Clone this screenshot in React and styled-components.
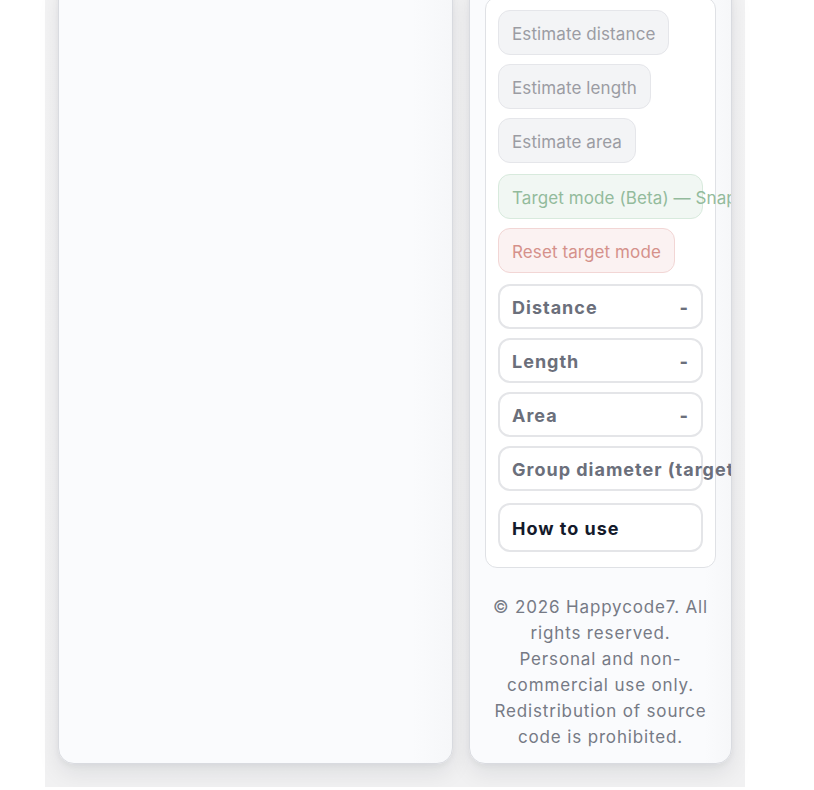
import React from 'react';
import styled, { createGlobalStyle } from 'styled-components';

const GlobalStyle = createGlobalStyle`
  html, body {
    margin: 0;
    padding: 0;
    background: #ffffff;
    font-family: Inter, "Noto Sans", sans-serif;
    overflow: hidden;
  }
`;

const Shell = styled.div`
  width: 700px;
  margin: -19px 0 0 45px;
  padding: 0 13px 23px;
  box-sizing: border-box;
  background: linear-gradient(180deg, #f3f3f4 0%, #f1f1f2 100%);
  display: grid;
  grid-template-columns: 395px 263px;
  gap: 16px;
`;

const Panel = styled.div`
  background: linear-gradient(90deg, #fafbfd 0%, #fafbfd 90%, #f6f7f9 100%);
  border: 1px solid #d9dbe0;
  border-radius: 16px;
  box-shadow: 0 10px 22px rgba(17, 24, 39, 0.08), 0 2px 6px rgba(17, 24, 39, 0.05);
  overflow: hidden;
  box-sizing: border-box;
`;

const Canvas = styled(Panel)`
  min-height: 783px;
`;

const Sidebar = styled(Panel)`
  padding: 15px 15px 12px 15px;
  display: flex;
  flex-direction: column;
`;

const Card = styled.div`
  background: #ffffff;
  border: 1px solid #dfe1e5;
  border-radius: 12px;
  padding: 12px 12px 15px;
  display: flex;
  flex-direction: column;
  align-items: flex-start;
`;

const tones = {
  muted: { bg: '#f3f4f6', border: '#e5e6ea', color: '#9b9ca3' },
  green: { bg: '#f1f7f3', border: '#d8eadd', color: '#93bb9c' },
  red: { bg: '#fbf2f2', border: '#f2d6d5', color: '#d5918b' },
};

const Action = styled.button`
  height: 45px;
  margin-top: ${(p) => p.$gap || 0}px;
  padding: 2px 13px 0;
  box-sizing: border-box;
  border-radius: 12px;
  border: 1.5px solid ${(p) => tones[p.$tone].border};
  background: ${(p) => tones[p.$tone].bg};
  color: ${(p) => tones[p.$tone].color};
  font-family: Inter, "Noto Sans", sans-serif;
  font-size: 17px;
  letter-spacing: 0.1px;
  white-space: nowrap;
  text-align: left;
  overflow: visible;
  width: ${(p) => (p.$full ? '205px' : 'auto')};
`;

const Result = styled.div`
  width: 205px;
  height: ${(p) => p.$tall || 45}px;
  margin-top: ${(p) => p.$gap || 0}px;
  box-sizing: border-box;
  padding: 2px 12px 0 12px;
  border: 2px solid #e4e5e8;
  border-radius: 12px;
  background: #ffffff;
  display: flex;
  align-items: center;
  justify-content: space-between;
  font-size: 18px;
  font-weight: 700;
  letter-spacing: 1px;
  color: ${(p) => (p.$strong ? '#141a2b' : '#6b6f7b')};
  white-space: nowrap;
`;

const Value = styled.span`
  font-weight: 800;
`;

const Footer = styled.p`
  margin: 26px 0 0;
  padding: 0 6px;
  text-align: center;
  font-size: 17px;
  line-height: 26px;
  letter-spacing: 0.85px;
  color: #767a85;
`;

function App() {
  return (
    <>
      <GlobalStyle />
      <Shell>
        <Canvas />
        <Sidebar>
          <Card>
            <Action $tone="muted">Estimate distance</Action>
            <Action $tone="muted" $gap={9}>Estimate length</Action>
            <Action $tone="muted" $gap={9}>Estimate area</Action>
            <Action $tone="green" $gap={11} $full>
              Target mode (Beta) — Snap to target
            </Action>
            <Action $tone="red" $gap={9}>Reset target mode</Action>
            <Result $gap={11}>
              Distance <Value>-</Value>
            </Result>
            <Result $gap={9}>
              Length <Value>-</Value>
            </Result>
            <Result $gap={9}>
              Area <Value>-</Value>
            </Result>
            <Result $gap={9}>Group diameter (target)</Result>
            <Result $gap={12} $tall={49} $strong>
              How to use
            </Result>
          </Card>
          <Footer>
            © 2026 Happycode7. All rights reserved. Personal and non-commercial use only.
            Redistribution of source code is prohibited.
          </Footer>
        </Sidebar>
      </Shell>
    </>
  );
}

export default App;
